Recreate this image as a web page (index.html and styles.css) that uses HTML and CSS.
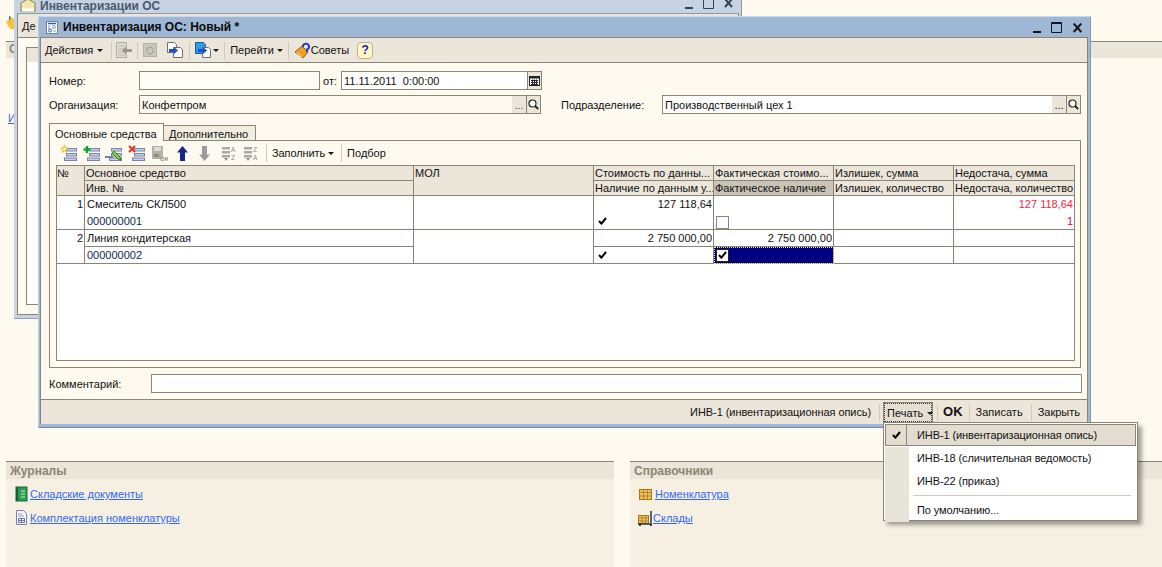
FILE: index.html
```html
<!DOCTYPE html>
<html lang="ru">
<head>
<meta charset="utf-8">
<title>Инвентаризация ОС: Новый *</title>
<link rel="stylesheet" href="styles.css">
</head>
<body>
<svg class="defs" width="0" height="0">
  <symbol id="lines" viewBox="0 0 17 17">
    <g fill="#c9d0e6" stroke="#7484b0"><rect x="6.5" y="3.5" width="10" height="2.5"/><rect x="6.5" y="8.5" width="10" height="2.5"/><rect x="4.5" y="13" width="12" height="2.5"/></g>
  </symbol>
  <symbol id="tick" viewBox="0 0 9 8">
    <path d="M1 4l2.4 2.6L8 1" fill="none" stroke="#000" stroke-width="2"/>
  </symbol>
  <symbol id="drop" viewBox="0 0 6 3"><path d="M0 0h6L3 3z" fill="#1a1a1a"/></symbol>
  <symbol id="loupe" viewBox="0 0 11 11">
    <circle cx="4.5" cy="4.5" r="3.5" fill="#fff" stroke="#222" stroke-width="1.2"/><path d="M7 7l3.2 3" stroke="#222" stroke-width="1.8"/>
  </symbol>
</svg>
<div class="desk">
  <div class="page-top">
    <svg class="page-logo" width="8" height="16" viewBox="0 0 8 16"><path d="M0 8l5-5 3 2v10H4z" fill="#f2c43c"/><path d="M3 2l2 1-2 4z" fill="#3a6fd0"/></svg>
  </div>
  <div class="strip"><span class="strip-text">С</span></div>
  <a class="back-link" href="#">И</a>
  <div class="panels">
    <section class="panel">
      <h3 class="panel-head">Журналы</h3>
      <ul class="links">
        <li class="link-row">
          <svg class="ico-link" width="13" height="16" viewBox="0 0 13 16"><rect x="1" y="1" width="11" height="14" fill="#2f9a55" stroke="#17693a"/><rect x="1" y="1" width="2" height="14" fill="#14602f"/><path d="M6 5h4M6 8h4M6 11h4" stroke="#c8f0d0"/></svg>
          <a href="#">Складские документы</a>
        </li>
        <li class="link-row">
          <svg class="ico-link" width="13" height="16" viewBox="0 0 13 16"><path d="M1.500 .5h7l3 3v11h-10z" fill="#f3f4fb" stroke="#7c83a8"/><path d="M3 4h4M3 6h6" stroke="#9aa0c0"/><path d="M3.500 8.500h6v4h-6zM6.500 8.500v4M3.500 10.500h6" fill="none" stroke="#6f78a0"/></svg>
          <a href="#">Комплектация номенклатуры</a>
        </li>
      </ul>
    </section>
    <section class="panel">
      <h3 class="panel-head">Справочники</h3>
      <ul class="links links-right">
        <li class="link-row">
          <svg class="ico-box" width="13" height="11" viewBox="0 0 13 11"><rect x=".5" y=".5" width="12" height="10" fill="#f1c45a" stroke="#a8741c"/><path d="M.5 3.500h12M.5 7h12M4.500 .5v10M8.500 .5v10" stroke="#b5832a"/></svg>
          <a href="#">Номенклатура</a>
        </li>
        <li class="link-row link-cart">
          <svg width="16" height="16" viewBox="0 0 16 16"><rect x="1.500" y="5.500" width="10" height="8" fill="#f1c45a" stroke="#a8741c"/><path d="M1.500 8h10M1.500 11h10M5 5.500v8M8.500 5.500v8" stroke="#b5832a"/><path d="M14 1v13H1" fill="none" stroke="#25384f" stroke-width="1.500"/><circle cx="3" cy="15" r="1" fill="#111"/><circle cx="14" cy="15" r="1" fill="#111"/></svg>
          <a href="#">Склады</a>
        </li>
      </ul>
    </section>
  </div>

  <div class="win win-back">
    <header class="back-title">
      <svg class="back-ico" width="16" height="14" viewBox="0 0 16 14"><path d="M1 12V4l7-4 7 4v8z" fill="#f4e6b0" stroke="#8a7a3c"/><path d="M2 11h12" stroke="#fff" stroke-width="3"/></svg>
      <span class="back-name">Инвентаризации ОС</span>
      <span class="ctrls ctrls-back">
        <svg width="8" height="10" viewBox="0 0 8 10"><rect y="8" width="8" height="2" fill="#2f4557"/></svg>
        <svg width="11" height="10" viewBox="0 0 11 10"><path d="M.5 0v9.500h10V0" fill="none" stroke="#2f4557"/></svg>
        <svg width="9" height="9" viewBox="0 0 9 9"><path d="M1 0l7 8M8 0L1 8" stroke="#2f4557" stroke-width="2"/></svg>
      </span>
    </header>
    <div class="back-body">
      <div class="back-tools">Де</div>
      <div class="back-content"><div class="back-box"><div class="back-box-head"></div></div></div>
    </div>
  </div>

  <div class="win win-main">
    <header class="main-title">
      <svg class="main-ico" width="12" height="13" viewBox="0 0 12 13"><rect x=".5" y=".5" width="11" height="12" fill="#fff" stroke="#6f7fa8"/><path d="M2 2.500h8" stroke="#2f5fb0" stroke-width="1.500"/><path d="M2 5h2M6 5h4M2 7h2M6 7h4" stroke="#8a96b8"/><circle cx="4" cy="9.500" r="1.500" fill="none" stroke="#3060b0"/><path d="M7 10h3" stroke="#8a96b8"/></svg>
      <span class="main-name">Инвентаризация ОС: Новый *</span>
      <span class="ctrls ctrls-main">
        <svg class="ctl-min" width="9" height="11" viewBox="0 0 9 11"><rect y="9" width="8" height="2" fill="#141414"/></svg>
        <svg class="ctl-max" width="11" height="11" viewBox="0 0 11 11"><path d="M.5 .5h10v10H.5zM.5 1.500h10" fill="none" stroke="#141414"/></svg>
        <svg width="9" height="10" viewBox="0 0 9 10"><path d="M.7 .5l7.600 8.500M8.300 .5L.7 9" stroke="#141414" stroke-width="2"/></svg>
      </span>
    </header>
    <div class="win-body">
      <nav class="toolbar">
        <span class="tb-text tb-actions">Действия</span>
        <svg class="drop drop-a" width="6" height="3"><use href="#drop"/></svg>
        <i class="sep sep-1"></i>
        <svg class="tb-ico t1" width="16" height="16" viewBox="0 0 16 16"><rect x=".5" y=".5" width="10" height="15" fill="#dedbd2" stroke="#b3b0a8"/><path d="M2 4h7M2 7h7M2 10h7M2 13h7" stroke="#bdbab2"/><path d="M16 7H10V4.500L6 8.500l4 4V10h6z" fill="#9a978f"/></svg>
        <i class="sep sep-2"></i>
        <svg class="tb-ico t2" width="14" height="14" viewBox="0 0 14 14"><rect x=".5" y=".5" width="13" height="13" fill="#c9c6bd" stroke="#b3b0a8"/><path d="M4 8a3 3 0 0 1 5-3l1 1M10 7a3 3 0 0 1-5 3L4 9" fill="none" stroke="#98958c"/></svg>
        <svg class="tb-ico t3" width="16" height="16" viewBox="0 0 16 16"><path d="M.5.5h7l2 2v8h-9z" fill="#fff" stroke="#6b6f80"/><path d="M6.500 5.500h7l2 2v8h-9z" fill="#fff" stroke="#6b6f80"/><path d="M2 7h5V5l4 3.500L7 12v-2H2z" fill="#1f4fc8"/></svg>
        <i class="sep sep-3"></i>
        <svg class="tb-ico t4" width="16" height="16" viewBox="0 0 16 16"><path d="M.5.5h8l2 2v9H.5z" fill="#2f9fe8" stroke="#205a9a"/><path d="M7.500 5.500h6l2 2v8h-8z" fill="#fff" stroke="#6b6f80"/><path d="M3 7h5V5l4 3.500L8 12v-2H3z" fill="#1f4fc8"/></svg>
        <svg class="drop drop-b" width="6" height="3"><use href="#drop"/></svg>
        <i class="sep sep-4"></i>
        <span class="tb-text tb-go">Перейти</span>
        <svg class="drop drop-c" width="6" height="3"><use href="#drop"/></svg>
        <i class="sep sep-5"></i>
        <svg class="tb-ico t5" width="16" height="17" viewBox="0 0 16 17"><path d="M1 10l7-6 6 6-5 6z" fill="#f0a020" stroke="#a05010"/><path d="M3 10.500l5 5" stroke="#fff"/><path d="M9 5a3 3 0 1 1 4 2.500V10" fill="none" stroke="#1f3fd0" stroke-width="2"/></svg>
        <span class="tb-text tb-tips">Советы</span>
        <span class="help">?</span>
      </nav>

      <form class="form">
        <div class="row row-1">
          <label class="lbl lbl-main">Номер:</label>
          <div class="field f-num"></div>
          <label class="lbl lbl-ot">от:</label>
          <div class="field f-date">
            <span class="f-val">11.11.2011&nbsp; 0:00:00</span>
            <span class="fbtn"><svg width="11" height="10" viewBox="0 0 11 10"><rect x=".5" y=".5" width="10" height="9" fill="#fff" stroke="#222"/><path d="M.5 1.500h10" stroke="#222" stroke-width="2"/><path d="M2 4.500h7M2 6.500h7M2 8.500h7M3.500 3.500v6M5.500 3.500v6M7.500 3.500v6" stroke="#222"/></svg></span>
          </div>
        </div>
        <div class="row row-2">
          <label class="lbl lbl-main">Организация:</label>
          <div class="field f-org">
            <span class="f-val">Конфетпром</span>
            <span class="fbtn fbtn-dots">...</span>
            <span class="fbtn"><svg width="11" height="11"><use href="#loupe"/></svg></span>
          </div>
          <label class="lbl lbl-dep">Подразделение:</label>
          <div class="field f-dep">
            <span class="f-val">Производственный цех 1</span>
            <span class="fbtn fbtn-dots">...</span>
            <span class="fbtn"><svg width="11" height="11"><use href="#loupe"/></svg></span>
          </div>
        </div>

        <div class="tabs">
          <span class="tab tab-on">Основные средства</span>
          <span class="tab">Дополнительно</span>
        </div>
        <div class="tabpanel">
          <div class="subtools">
            <svg class="st st-1" width="17" height="17"><use href="#lines"/><path d="M4.500 0l1 2.500L8 3 6 5l.5 2.500L4.500 6l-2 1.500L3 5 1 3l2.500-.5z" fill="#fff27a" stroke="#d0a820" stroke-width=".7"/></svg>
            <svg class="st st-2" width="17" height="17"><use href="#lines"/><path d="M4 1v7M.5 4.500h7" stroke="#17a02f" stroke-width="2.500"/></svg>
            <svg class="st st-3" width="17" height="17"><use href="#lines"/><path d="M7 8l6 6 3 1-1-3-6-6z" fill="#7fd030" stroke="#2f6a20" stroke-width=".8"/><path d="M0 12h8" stroke="#7484b0" stroke-width="2"/></svg>
            <svg class="st st-4" width="17" height="17"><use href="#lines"/><path d="M1 1l6 6M7 1L1 7" stroke="#e8341c" stroke-width="2"/></svg>
            <svg class="st st-5" width="17" height="17" viewBox="0 0 17 17"><rect x="1" y="1" width="11" height="13" fill="#b5b2aa"/><rect x="3" y="2" width="7" height="4" fill="#dedbd2"/><rect x="3" y="9" width="5" height="3" fill="#8f8c84"/><text class="st-ok" x="9" y="15.500">OK</text></svg>
            <svg class="st st-6" width="11" height="15" viewBox="0 0 11 15"><path d="M5.500 0L11 6.500H8V15H3V6.500H0z" fill="#14288c"/></svg>
            <svg class="st st-7" width="11" height="15" viewBox="0 0 11 15"><path d="M3 0h5v8.500h3L5.500 15 0 8.500h3z" fill="#9a9aa0"/></svg>
            <svg class="st st-8" width="16" height="17" viewBox="0 0 16 17"><g fill="#a9a9a9"><rect x="1" y="2" width="8" height="2.500"/><rect x="1" y="6" width="8" height="2.500"/><rect x="1" y="10" width="8" height="2.500"/></g><path d="M3 13h4l-2 3z" fill="#8f8f8f"/><text class="st-az" x="10" y="7">A</text><text class="st-az" x="10" y="15">Z</text></svg>
            <svg class="st st-9" width="16" height="17" viewBox="0 0 16 17"><g fill="#a9a9a9"><rect x="1" y="2" width="8" height="2.500"/><rect x="1" y="6" width="8" height="2.500"/><rect x="1" y="10" width="8" height="2.500"/></g><path d="M3 13h4l-2 3z" fill="#8f8f8f"/><text class="st-az" x="10" y="7">Z</text><text class="st-az" x="10" y="15">A</text></svg>
            <i class="sep sep-st1"></i>
            <span class="tb-text st-fill">Заполнить</span>
            <svg class="drop drop-d" width="6" height="3"><use href="#drop"/></svg>
            <i class="sep sep-st2"></i>
            <span class="tb-text">Подбор</span>
          </div>
          <div class="grid">
            <table class="tbl">
              <colgroup><col class="c-n"><col class="c-main"><col class="c-mol"><col class="c-w"><col class="c-w"><col class="c-w"><col class="c-w"></colgroup>
              <thead>
                <tr>
                  <th rowspan="2" class="hd-top hd-no">№</th>
                  <th>Основное средство</th>
                  <th rowspan="2" class="hd-top">МОЛ</th>
                  <th>Стоимость по данны...</th>
                  <th>Фактическая стоимо...</th>
                  <th>Излишек, сумма</th>
                  <th>Недостача, сумма</th>
                </tr>
                <tr>
                  <th>Инв. №</th>
                  <th>Наличие по данным у...</th>
                  <th class="hd-sel">Фактическое наличие</th>
                  <th>Излишек, количество</th>
                  <th>Недостача, количество</th>
                </tr>
              </thead>
              <tbody>
                <tr class="r-up">
                  <td rowspan="2" class="num">1</td>
                  <td>Смеситель СКЛ500</td>
                  <td rowspan="2"></td>
                  <td class="num">127 118,64</td>
                  <td></td>
                  <td></td>
                  <td class="num red">127 118,64</td>
                </tr>
                <tr class="r-low">
                  <td class="code">000000001</td>
                  <td class="chk"><svg class="tick" width="9" height="8"><use href="#tick"/></svg></td>
                  <td class="box-cell"><span class="box"></span></td>
                  <td></td>
                  <td class="num red2">1</td>
                </tr>
                <tr class="r-up r-cur">
                  <td rowspan="2" class="num">2</td>
                  <td>Линия кондитерская</td>
                  <td rowspan="2"></td>
                  <td class="num">2 750 000,00</td>
                  <td class="num">2 750 000,00</td>
                  <td></td>
                  <td></td>
                </tr>
                <tr class="r-low">
                  <td class="code">000000002</td>
                  <td class="chk"><svg class="tick" width="9" height="8"><use href="#tick"/></svg></td>
                  <td class="cell-sel"><span class="box box-on"><svg width="9" height="8"><use href="#tick"/></svg></span></td>
                  <td></td>
                  <td></td>
                </tr>
              </tbody>
            </table>
          </div>
        </div>

        <div class="row row-c">
          <label class="lbl lbl-com">Комментарий:</label>
          <div class="field f-com"></div>
        </div>
      </form>

      <footer class="status">
        <span class="tb-text st-doc">ИНВ-1 (инвентаризационная опись)</span>
        <i class="sep sep-f"></i>
        <span class="print">Печать<svg class="drop drop-p" width="6" height="3"><use href="#drop"/></svg></span>
        <i class="sep sep-g"></i>
        <span class="ok">OK</span>
        <i class="sep sep-h"></i>
        <span class="tb-text st-save">Записать</span>
        <i class="sep sep-i"></i>
        <span class="tb-text st-close">Закрыть</span>
      </footer>
    </div>
  </div>

  <div class="menu">
    <div class="mi mi-on"><span class="mi-check"><svg width="9" height="8"><use href="#tick"/></svg></span><span class="mi-t">ИНВ-1 (инвентаризационная опись)</span></div>
    <div class="mi"><span class="mi-gut"></span><span class="mi-t">ИНВ-18 (сличительная ведомость)</span></div>
    <div class="mi"><span class="mi-gut"></span><span class="mi-t">ИНВ-22 (приказ)</span></div>
    <div class="mi-sep"><span class="mi-gut"></span><i class="mi-line"></i></div>
    <div class="mi mi-last"><span class="mi-gut"></span><span class="mi-t">По умолчанию...</span></div>
  </div>
</div>
</body>
</html>
```
FILE: styles.css
```css
* { box-sizing: border-box; }
html, body { margin: 0; padding: 0; }
body { background: #fffaef; font: 11px/14px "Liberation Sans", Arial, sans-serif; color: #111; overflow: hidden; }
.defs { position: absolute; }
.desk { position: relative; width: 1162px; height: 567px; overflow: hidden; background: #fffaef; }

.page-top { height: 41px; padding: 14px 0 0 6px; }
.page-logo { display: block; }
.strip { margin-left: 6px; height: 17px; background: #ebe5da; border-top: 1px solid #8b8674; padding-left: 3px; }
.strip-text { font-weight: bold; font-size: 12px; color: #8b8674; }
.back-link { display: block; margin: 53px 0 0 8px; color: #3366ff; height: 14px; }
.panels { display: grid; grid-template-columns: 608px 532px; column-gap: 16px; margin: 336px 0 0 6px; height: 106px; }
.panel { background: #f6f0e3; }
.panel-head { margin: 0; height: 18px; background: #ebe5da; border-top: 1px solid #8b8674; padding: 2px 0 0 4px; font-size: 12px; line-height: 14px; color: #8b8674; }
.links { list-style: none; margin: 0; padding: 7px 0 0 9px; display: flex; flex-direction: column; gap: 8px; }
.links-right { padding-left: 7px; }
.link-row { display: flex; align-items: center; height: 16px; gap: 2px; }
.link-row a { color: #3366ff; }
.ico-link { flex: none; }
.ico-box { margin: 0 1px 0 2px; }
.link-cart { gap: 0; }

.win { position: absolute; }
.win-back { left: 14px; top: 0; width: 728px; height: 319px; background: #c5d3e3; border-right: 1px solid #8f9aa8; border-bottom: 1px solid #8fa3ba; padding: 0 2px 3px 3px; display: flex; flex-direction: column; }
.back-title { height: 14px; display: flex; align-items: center; border-bottom: 1px solid #8f9aa8; overflow: hidden; flex: none; }
.back-ico { margin: -2px 0 0 3px; }
.back-name { margin-left: 4px; font-weight: bold; font-size: 12px; color: #4a5a6a; margin-top: -2px; }
.ctrls { margin-left: auto; display: flex; align-items: flex-start; }
.ctrls-back { gap: 10px; padding-right: 6px; margin-top: -1px; height: 14px; }
.back-body { flex: 1; border: 1px solid #8b8674; border-top: 0; background: #fffaef; display: flex; flex-direction: column; }
.back-tools { height: 24px; background: #ebe5da; border-bottom: 1px solid #8b8674; padding: 5px 0 0 4px; }
.back-content { padding: 9px 0 0 8px; }
.back-box { height: 258px; border: 1px solid #8b8674; background: #fff; }
.back-box-head { height: 14px; background: #ebe5da; }

.win-main { left: 38px; top: 16px; width: 1053px; height: 412px; background: #9db7d5; border-top: 1px solid #c6daee; border-right: 1px solid #7f9ab8; border-bottom: 1px solid #6f8cab; border-left: 1px solid #b8cde4; padding: 0 2px 3px 1px; display: flex; flex-direction: column; }
.main-title { height: 20px; display: flex; align-items: center; flex: none; }
.main-ico { margin-left: 6px; }
.main-name { margin-left: 5px; font-weight: bold; font-size: 12px; color: #0a0a0a; }
.ctrls-main { padding-right: 6px; align-items: flex-end; height: 14px; margin-top: -2px; }
.ctl-min { margin-right: 9px; }
.ctl-max { margin-right: 11px; }
.win-body { flex: 1; border: 1px solid #8b8674; border-bottom: 0; background: #fffaef; display: flex; flex-direction: column; min-height: 0; }

.toolbar { height: 25px; flex: none; background: #ebe5da; border-bottom: 1px solid #8b8674; display: flex; align-items: center; padding-left: 4px; }
.tb-text { white-space: nowrap; }
.tb-ico { flex: none; }
.sep { flex: none; width: 1px; height: 17px; background: #cfcabd; }
.drop { flex: none; }
.drop-a { margin-left: 4px; }
.sep-1 { margin-left: 8px; }
.t1 { margin-left: 4px; }
.sep-2 { margin-left: 5px; }
.t2 { margin-left: 5px; }
.t3 { margin-left: 10px; }
.sep-3 { margin-left: 6px; }
.t4 { margin-left: 5px; }
.drop-b { margin-left: 2px; }
.sep-4 { margin-left: 5px; }
.tb-go { margin-left: 5px; }
.drop-c { margin-left: 3px; }
.sep-5 { margin-left: 5px; }
.t5 { margin-left: 5px; }
.tb-tips { margin-left: 1px; }
.help { margin-left: 8px; width: 16px; height: 17px; border: 1px solid #b8b39f; border-radius: 4px; background: #fff8c0; color: #1a1ac8; font: bold 12px/15px "Liberation Sans", sans-serif; text-align: center; }

.form { flex: 1; padding: 8px 6px 0 8px; display: flex; flex-direction: column; min-height: 0; }
.row { display: flex; align-items: center; height: 19px; flex: none; }
.row-2 { margin-top: 5px; }
.lbl { flex: none; white-space: nowrap; }
.lbl-main { width: 90px; }
.lbl-ot { width: 21px; padding-left: 3px; }
.lbl-dep { margin-left: 20px; width: 101px; }
.lbl-com { width: 102px; }
.field { height: 19px; border: 1px solid #8b8674; background: #fff; display: flex; align-items: stretch; }
.f-num { width: 181px; background: #fffdf6; }
.f-date { width: 201px; }
.f-org { width: 402px; background: #fffaef; }
.f-dep { flex: 1; }
.f-com { flex: 1; margin-right: -1px; }
.f-val { flex: 1; padding: 2px 0 0 2px; white-space: nowrap; }
.fbtn { flex: none; width: 14px; background: #ebe5da; border-left: 1px solid #8b8674; display: flex; align-items: center; justify-content: center; }
.fbtn-dots { border-left: 0; align-items: flex-end; line-height: 14px; padding-bottom: 1px; }
.f-org .fbtn-dots { color: #555; }

.tabs { display: flex; align-items: flex-end; height: 18px; margin-top: 9px; flex: none; position: relative; z-index: 1; margin-bottom: -1px; }
.tab { height: 16px; padding: 1px 5px 0 5px; background: #f2ede1; border: 1px solid #8b8674; border-left: 0; border-bottom: 1px solid #8b8674; white-space: nowrap; width: 92px; }
.tab-on { height: 18px; width: 115px; padding-top: 3px; background: #fffaef; border-left: 1px solid #8b8674; border-bottom: 0; }
.tabpanel { height: 228px; border: 1px solid #8b8674; padding: 0 5px 6px 6px; display: flex; flex-direction: column; flex: none; }
.subtools { height: 24px; flex: none; display: flex; align-items: center; padding-left: 4px; }
.st { flex: none; }
.st-2 { margin-left: 6px; }
.st-3 { margin-left: 5px; }
.st-4 { margin-left: 6px; }
.st-5 { margin-left: 6px; }
.st-6 { margin-left: 9px; }
.st-7 { margin-left: 11px; }
.st-8 { margin-left: 11px; }
.st-9 { margin-left: 6px; }
.sep-st1 { margin-left: 7px; }
.st-fill { margin-left: 5px; letter-spacing: -.1px; }
.drop-d { margin-left: 3px; }
.sep-st2 { margin-left: 7px; }
.sep-st2 + .tb-text { margin-left: 5px; }
.st-ok { font: bold 6px "Liberation Sans", sans-serif; fill: #8f8c84; }
.st-az { font: 7px "Liberation Mono", monospace; fill: #8f8f8f; }

.grid { flex: 1; border: 1px solid #8b8674; background: #fff; min-height: 0; overflow: hidden; }
.tbl { table-layout: fixed; width: 1017px; border-collapse: separate; border-spacing: 0; }
.c-n { width: 28px; }
.c-main { width: 329px; }
.c-mol { width: 180px; }
.c-w { width: 120px; }
.tbl th, .tbl td { padding: 0 1px; border-right: 1px solid #8b8674; border-bottom: 1px solid #8b8674; overflow: hidden; white-space: nowrap; line-height: 14px; font-weight: normal; text-align: left; }
.tbl th:last-child, .tbl td:last-child { border-right: 0; }
.tbl th { height: 15px; background: #ebe5da; }
.hd-top { vertical-align: top; }
.tbl .hd-no { padding-left: 0; }
.tbl th.hd-sel { background: #c9c4b7; }
.tbl td { height: 17px; background: #fff; padding-left: 2px; padding-right: 1px; }
.r-up td { border-bottom: 0; vertical-align: top; padding-top: 1px; }
.r-up td[rowspan] { border-bottom: 1px solid #8b8674; }
.r-cur td { border-bottom: 1px solid #8b8674; }
.tbl .num { text-align: right; }
.code { color: #12284a; }
.red { color: #ff1a40; }
.red2 { color: #e00050; }
.tbl .chk { padding-left: 4px; vertical-align: middle; }
.tick { display: block; }
.box-cell { vertical-align: bottom; }
.box { display: block; width: 13px; height: 13px; border: 1px solid #8b8674; background: #fff; }
.box-on { display: flex; align-items: center; justify-content: center; border-color: #222; }
.tbl .cell-sel { background: #000080; outline: 1px dotted #f0e8a0; outline-offset: -1px; padding-left: 2px; vertical-align: middle; }

.row-c { margin-top: 6px; }

.status { height: 25px; flex: none; background: #ebe5da; border-top: 1px solid #8b8674; display: flex; align-items: center; justify-content: flex-end; padding-right: 7px; }
.st-doc { letter-spacing: -.07px; }
.sep-f { margin-left: 8px; }
.print { margin-left: 3px; width: 50px; height: 21px; border: 1px solid #8b8674; outline: 1px dotted #333; outline-offset: -2px; padding: 3px 0 0 3px; background: #e4dfd2; white-space: nowrap; }
.drop-p { margin-left: 4px; vertical-align: middle; }
.sep-g { margin-left: 4px; }
.ok { margin-left: 5px; font-weight: bold; font-size: 13px; }
.sep-h { margin-left: 6px; }
.st-save { margin-left: 6px; }
.sep-i { margin-left: 8px; }
.st-close { margin-left: 6px; }

.menu { position: absolute; left: 883px; top: 422px; width: 255px; height: 99px; background: #fff; border: 1px solid #8b8674; padding: 1px; box-shadow: 4px 4px 4px rgba(0,0,0,.35); display: flex; flex-direction: column; }
.mi { height: 23px; display: flex; align-items: center; flex: none; }
.mi-t { white-space: nowrap; letter-spacing: -.1px; padding-bottom: 1px; }
.mi-on { height: 22px; background: #e2ddd0; border: 1px solid #8b8674; margin-bottom: 1px; }
.mi-check { width: 21px; height: 20px; border-right: 1px solid #8b8674; display: flex; align-items: center; justify-content: center; flex: none; margin-right: 10px; }
.mi-gut { width: 24px; align-self: stretch; background: #e9e4d9; flex: none; margin-right: 8px; }
.mi-sep { display: flex; height: 5px; flex: none; align-items: center; }
.mi-sep .mi-gut { margin-right: 4px; }
.mi-line { flex: 1; height: 1px; background: #cfcabd; margin-right: 5px; }
.mi-last { height: 24px; }
```
